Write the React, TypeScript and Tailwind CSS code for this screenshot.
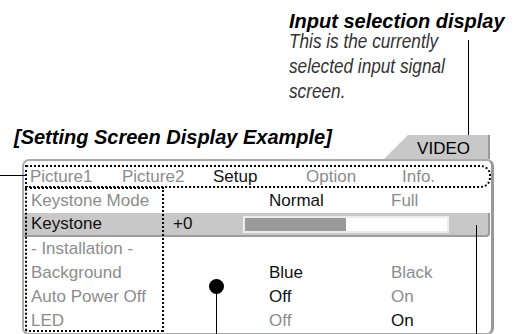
import React from 'react';

const gray = 'text-[#8c8c8c]';
const dark = 'text-[#111]';

export default function App() {
  return (
    <div className="relative w-[528px] h-[334px] overflow-hidden bg-white font-['Liberation_Sans',Arial,sans-serif] text-black">
      {/* Callout text */}
      <div className="pl-[289px] pt-[13px]">
        <div className="text-[20px] leading-[16px] font-bold italic">Input selection display</div>
        <div className="origin-left scale-x-[0.86] text-[20px] leading-[25px] italic text-[#333] whitespace-nowrap">
          <div>This is the currently</div>
          <div>selected input signal</div>
          <div>screen.</div>
        </div>
      </div>

      {/* Heading + input tab */}
      <div className="mt-[24px] flex items-start justify-between pl-[14px] pr-[38px]">
        <div className="text-[20px] leading-[18px] font-bold italic">[Setting Screen Display Example]</div>
        <div className="mt-[7px] h-[24px] w-[106px] bg-[#c8c8c8] border-r-2 border-[#9a9a9a] [clip-path:polygon(24px_0,100%_0,100%_100%,0_100%)] flex items-end justify-end pr-[18px]">
          <span className="text-[17px] leading-[20px]">VIDEO</span>
        </div>
      </div>

      {/* Setup panel */}
      <div className="ml-[22px] w-[472px] h-[176px] border-2 border-r-[3px] border-[#ababab] border-r-[#999] rounded-[7px] pt-[4px] text-[17px]">
        {/* Menu tabs */}
        <div className="ml-[1px] h-[23px] border-2 border-dotted border-black rounded-r-[10px] flex leading-[19px] pl-[3px]">
          <span className={`w-[92px] ${gray}`}>Picture1</span>
          <span className={`w-[91px] ${gray}`}>Picture2</span>
          <span className={`w-[93px] ${dark}`}>Setup</span>
          <span className={`w-[96px] ${gray}`}>Option</span>
          <span className={gray}>Info.</span>
        </div>

        {/* Rows */}
        <div className="relative leading-[24px] pt-[1px]">
          <div className="flex h-[24px]">
            <span className={`w-[149px] pl-[7px] ${gray}`}>Keystone Mode</span>
            <span className="w-[96px]" />
            <span className={`w-[122px] ${dark}`}>Normal</span>
            <span className={gray}>Full</span>
          </div>
          <div className="flex h-[24px] items-center bg-[#c8c8c8] border-b-2 border-r-2 border-[#9c9c9c] rounded-br-[4px] mr-[1px]">
            <span className={`w-[149px] pl-[7px] ${dark}`}>Keystone</span>
            <span className={`w-[70px] ${dark}`}>+0</span>
            <div className="w-[206px] h-[17px] border-2 border-[#ececec] bg-white flex">
              <div className="w-[101px] bg-[#9a9a9a]" />
            </div>
          </div>
          <div className="flex h-[24px]">
            <span className={`w-[149px] pl-[7px] ${gray}`}>- Installation -</span>
          </div>
          <div className="flex h-[24px]">
            <span className={`w-[149px] pl-[7px] ${gray}`}>Background</span>
            <span className="w-[96px]" />
            <span className={`w-[122px] ${dark}`}>Blue</span>
            <span className={gray}>Black</span>
          </div>
          <div className="flex h-[24px]">
            <span className={`w-[149px] pl-[7px] ${gray}`}>Auto Power Off</span>
            <span className="w-[96px]" />
            <span className={`w-[122px] ${dark}`}>Off</span>
            <span className={gray}>On</span>
          </div>
          <div className="flex h-[24px]">
            <span className={`w-[149px] pl-[7px] ${gray}`}>LED</span>
            <span className="w-[96px]" />
            <span className={`w-[122px] ${gray}`}>Off</span>
            <span className={dark}>On</span>
          </div>

          {/* Item column outline */}
          <div className="absolute left-[1px] top-[-1px] w-[139px] h-[145px] border-2 border-dotted border-black rounded-bl-[3px]" />
        </div>
      </div>

      {/* Callout lines */}
      <div className="absolute left-0 top-[175px] w-[25px] h-px bg-black" />
      <div className="absolute left-[468px] top-[40px] w-px h-[95px] bg-black" />
      <div className="absolute left-[476px] top-[225px] w-px h-[110px] bg-black" />
      <div className="absolute left-[209px] top-[279px] w-[15px] h-[15px] rounded-full bg-black" />
      <div className="absolute left-[216px] top-[287px] w-px h-[48px] bg-black" />
    </div>
  );
}
